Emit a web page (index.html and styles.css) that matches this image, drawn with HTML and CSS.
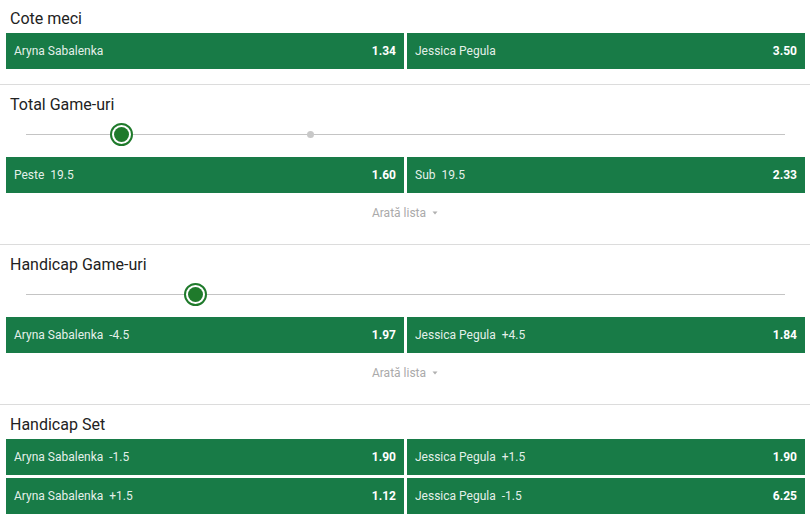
FILE: index.html
```html
<!DOCTYPE html>
<html lang="ro">
<head>
<meta charset="utf-8">
<link rel="stylesheet" href="styles.css">
</head>
<body>
<div class="page">
  <section class="market">
    <h2 class="title">Cote meci</h2>
    <div class="grid">
      <div class="odd"><span class="name">Aryna Sabalenka</span><span class="price">1.34</span></div>
      <div class="odd"><span class="name">Jessica Pegula</span><span class="price">3.50</span></div>
    </div>
  </section>

  <section class="market">
    <h2 class="title">Total Game-uri</h2>
    <div class="slider">
      <div class="track">
        <span class="dot" style="left: 284px"></span>
        <span class="thumb" style="left: 95px"></span>
      </div>
    </div>
    <div class="grid">
      <div class="odd"><span class="name">Peste<span class="line">19.5</span></span><span class="price">1.60</span></div>
      <div class="odd"><span class="name">Sub<span class="line">19.5</span></span><span class="price">2.33</span></div>
    </div>
    <div class="more">Arată lista <svg class="caret" width="6" height="4" viewBox="0 0 6 4"><path d="M0.5 0.5 L5.5 0.5 L3 3.5 Z" fill="#b0b0b0"/></svg></div>
  </section>

  <section class="market">
    <h2 class="title">Handicap Game-uri</h2>
    <div class="slider">
      <div class="track">
        <span class="thumb" style="left: 169px"></span>
      </div>
    </div>
    <div class="grid">
      <div class="odd"><span class="name">Aryna Sabalenka<span class="line">-4.5</span></span><span class="price">1.97</span></div>
      <div class="odd"><span class="name">Jessica Pegula<span class="line">+4.5</span></span><span class="price">1.84</span></div>
    </div>
    <div class="more">Arată lista <svg class="caret" width="6" height="4" viewBox="0 0 6 4"><path d="M0.5 0.5 L5.5 0.5 L3 3.5 Z" fill="#b0b0b0"/></svg></div>
  </section>

  <section class="market last">
    <h2 class="title">Handicap Set</h2>
    <div class="grid">
      <div class="odd"><span class="name">Aryna Sabalenka<span class="line">-1.5</span></span><span class="price">1.90</span></div>
      <div class="odd"><span class="name">Jessica Pegula<span class="line">+1.5</span></span><span class="price">1.90</span></div>
      <div class="odd"><span class="name">Aryna Sabalenka<span class="line">+1.5</span></span><span class="price">1.12</span></div>
      <div class="odd"><span class="name">Jessica Pegula<span class="line">-1.5</span></span><span class="price">6.25</span></div>
    </div>
  </section>
</div>
</body>
</html>
```

FILE: styles.css
```css
html, body {
  margin: 0;
  padding: 0;
  background: #fff;
}
body {
  font-family: Roboto, "Liberation Sans", Arial, sans-serif;
  color: #222;
  overflow: hidden;
}
.page {
  margin-top: -1px;
}
.market {
  border-bottom: 1px solid #dcdcdc;
  padding-bottom: 15px;
}
.market.last {
  border-bottom: none;
}
.title {
  margin: 0 0 4px;
  padding: 9px 10px 0;
  font-size: 16px;
  line-height: 21px;
  font-weight: 400;
  color: #222;
}
.grid {
  display: grid;
  grid-template-columns: 1fr 1fr;
  gap: 3px;
  padding: 0 5px 0 6px;
}
.odd {
  height: 36px;
  background: #187b47;
  display: flex;
  align-items: center;
  justify-content: space-between;
  padding: 0 8px;
  font-size: 12px;
}
.name {
  color: rgba(255, 255, 255, 0.9);
}
.line {
  margin-left: 6px;
}
.price {
  color: #fff;
  font-weight: 700;
}
.slider {
  height: 30px;
  margin-bottom: 8px;
  padding: 0 25px 0 26px;
  display: flex;
  align-items: center;
}
.track {
  position: relative;
  flex: 1;
  height: 1px;
  background: #c4c4c4;
}
.thumb {
  position: absolute;
  top: -11px;
  width: 23px;
  height: 23px;
  box-sizing: border-box;
  border: 2px solid #1f7a2b;
  border-radius: 50%;
  background: #fff;
  padding: 2px;
  margin-left: -11.5px;
  display: block;
}
.thumb::after {
  content: "";
  display: block;
  width: 100%;
  height: 100%;
  border-radius: 50%;
  background: #1f7a2b;
}
.dot {
  position: absolute;
  top: -3px;
  width: 7px;
  height: 7px;
  margin-left: -3.5px;
  border-radius: 50%;
  background: #c8c8c8;
  display: block;
}
.more {
  height: 36px;
  display: flex;
  align-items: center;
  justify-content: center;
  gap: 6px;
  font-size: 12px;
  color: #aaa;
  padding-top: 3px;
  box-sizing: border-box;
}
.caret {
  display: block;
}
```
